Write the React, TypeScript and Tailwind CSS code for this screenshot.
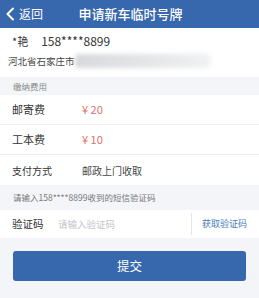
import React from 'react';

const font = { fontFamily: '"Noto Sans CJK SC", "Liberation Sans", sans-serif' };

function FeeRow({ label, value, red }: { label: string; value: string; red?: boolean }) {
  return (
    <div className="flex h-[30px] items-center border-b border-[#eef0f3] pl-3">
      <span className="w-[70px] text-[11px] text-[#333]">{label}</span>
      <span className={red ? 'text-[11px] text-[#e0706e]' : 'text-[11px] text-[#444]'}>{value}</span>
    </div>
  );
}

export default function App() {
  return (
    <div className="flex h-[298px] w-[259px] flex-col overflow-hidden bg-[#f3f5f8]" style={font}>
      <header className="relative flex h-[28px] shrink-0 items-center bg-[#3767ac] text-white">
        <div className="flex items-center pl-[5px]">
          <svg width="10" height="14" viewBox="0 0 10 14" fill="none">
            <path d="M8 1.5 L2.5 7 L8 12.5" stroke="white" strokeWidth="2" strokeLinecap="round" strokeLinejoin="round" />
          </svg>
          <span className="ml-[4px] text-[12px] leading-none">返回</span>
        </div>
        <div className="absolute left-0 right-0 top-0 flex h-full items-center justify-center pl-[2px] text-[13px] font-medium">
          申请新车临时号牌
        </div>
      </header>

      <div className="bg-white pl-3 pb-[9px]">
        <div className="flex h-[26px] items-center text-[11px] text-[#333]">
          <span>*艳</span>
          <span className="ml-[13px] text-[12px]">158****8899</span>
        </div>
        <div className="flex h-[14px] items-center text-[9.5px] text-[#444]">
          <span className="-ml-[4px]">河北省石家庄市</span>
          <div className="h-[14px] w-[135px] rounded-sm bg-gradient-to-r from-[#d8d9dc] via-[#e4e5e7] to-[#f0f1f2] blur-[2px]" />
        </div>
      </div>

      <div className="flex h-[18px] items-center pl-[13px] text-[8.5px] text-[#888]">缴纳费用</div>

      <div className="bg-white">
        <FeeRow label="邮寄费" value="¥ 20" red />
        <FeeRow label="工本费" value="¥ 10" red />
        <div className="flex h-[30px] items-center pl-3">
          <span className="w-[70px] text-[10px] text-[#333]">支付方式</span>
          <span className="text-[10px] text-[#444]">邮政上门收取</span>
        </div>
      </div>

      <div className="flex h-[25px] items-center pl-[13px] text-[8.5px] text-[#777]">
        请输入158****8899收到的短信验证码
      </div>

      <div className="flex h-[28px] items-center bg-white pl-3">
        <span className="w-[46px] text-[10.5px] text-[#333]">验证码</span>
        <span className="flex-1 text-[9.5px] text-[#c4c6ca]">请输入验证码</span>
        <div className="h-[22px] w-px bg-[#e3e5e8]" />
        <span className="w-[67px] pl-[10px] text-[9px] text-[#4a7cbd]">获取验证码</span>
      </div>

      <div className="px-[13px] pt-[13px]">
        <button
          type="button"
          className="flex h-[30px] w-full items-center justify-center rounded-[3px] bg-[#3767ac] text-[12.5px] text-white"
        >
          提交
        </button>
      </div>
    </div>
  );
}
